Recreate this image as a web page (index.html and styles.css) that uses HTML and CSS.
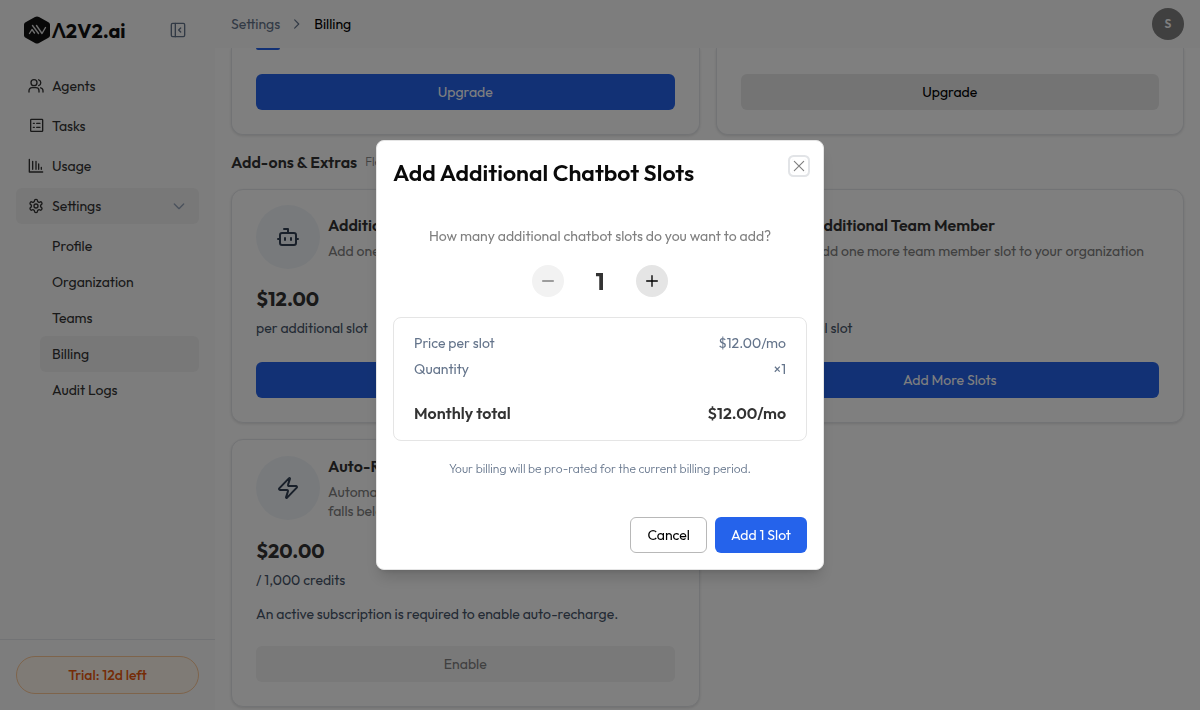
FILE: index.html
```html
<!DOCTYPE html>
<html lang="en">
<head>
<meta charset="utf-8">
<meta name="viewport" content="width=device-width, initial-scale=1">
<title>Billing</title>
<link rel="stylesheet" href="styles.css">
</head>
<body>
<div class="shell">
  <aside class="sidebar">
    <div class="brand">
      <a class="logo" href="#">
        <svg class="logo-mark" viewBox="0 0 26 28"><path d="M11 1a4 4 0 0 1 4 0l9 5a3 3 0 0 1 2 3v10a3 3 0 0 1-2 3l-9 5a4 4 0 0 1-4 0l-9-5a3 3 0 0 1-2-3V9a3 3 0 0 1 2-3z" fill="#111"/><path d="M5.500 17.500 8 13.500l2.500 3.500M8.500 9.500l6 8M12.500 9.500l5.500 8 3.500-6" fill="none" stroke="#ddd" stroke-width="1.400"/></svg>
        <span class="logo-text">Λ2V2.ai</span>
      </a>
      <button class="icon-button" type="button" aria-label="Collapse sidebar"><svg class="icon muted" viewBox="0 0 24 24"><rect x="2" y="2" width="20" height="20" rx="2"/><path d="M8 2v20M16 9l-3 3 3 3"/></svg></button>
    </div>
    <nav class="nav">
      <a class="nav-item" href="#"><svg class="icon" viewBox="0 0 24 24"><circle cx="9" cy="7" r="4.500"/><path d="M1.500 21v-2a4.500 4.500 0 0 1 4.500-4.500h6a4.500 4.500 0 0 1 4.500 4.500v2M16 2.700a4.500 4.500 0 0 1 0 8.600M22.500 21v-2a4.500 4.500 0 0 0-3.500-4.300"/></svg>Agents</a>
      <a class="nav-item" href="#"><svg class="icon" viewBox="0 0 24 24"><rect x="4" y="2" width="18" height="18" rx="1"/><path d="M8 8h1.500M13 8h5M8 14h1.500M13 14h5"/></svg>Tasks</a>
      <a class="nav-item" href="#"><svg class="icon" viewBox="0 0 24 24"><path d="M2 2v19h20M7 5v12M12 5v12M16 9v8M20 14v3"/></svg>Usage</a>
      <a class="nav-item active" href="#"><svg class="icon" viewBox="0 0 24 24"><path d="M12.220 2h-.440a2 2 0 0 0-2 2v.180a2 2 0 0 1-1 1.730l-.430.250a2 2 0 0 1-2 0l-.150-.080a2 2 0 0 0-2.730.730l-.220.380a2 2 0 0 0 .730 2.730l.150.100a2 2 0 0 1 1 1.720v.510a2 2 0 0 1-1 1.740l-.150.090a2 2 0 0 0-.730 2.730l.220.380a2 2 0 0 0 2.730.730l.150-.080a2 2 0 0 1 2 0l.430.250a2 2 0 0 1 1 1.730V20a2 2 0 0 0 2 2h.440a2 2 0 0 0 2-2v-.180a2 2 0 0 1 1-1.730l.430-.250a2 2 0 0 1 2 0l.150.080a2 2 0 0 0 2.730-.730l.220-.390a2 2 0 0 0-.730-2.730l-.150-.080a2 2 0 0 1-1-1.740v-.500a2 2 0 0 1 1-1.740l.150-.090a2 2 0 0 0 .730-2.730l-.220-.380a2 2 0 0 0-2.730-.730l-.150.080a2 2 0 0 1-2 0l-.430-.250a2 2 0 0 1-1-1.730V4a2 2 0 0 0-2-2z"/><circle cx="12" cy="12" r="3"/></svg>Settings<svg class="icon chevron" viewBox="0 0 24 24"><path d="m5 9 7 7 7-7"/></svg></a>
      <div class="subnav">
        <a class="sub-item" href="#">Profile</a>
        <a class="sub-item" href="#">Organization</a>
        <a class="sub-item" href="#">Teams</a>
        <a class="sub-item active" href="#">Billing</a>
        <a class="sub-item" href="#">Audit Logs</a>
      </div>
    </nav>
    <div class="sidebar-footer"><a class="trial" href="#">Trial: 12d left</a></div>
  </aside>
  <div class="page">
    <header class="topbar">
      <nav class="crumbs" aria-label="Breadcrumb"><a href="#">Settings</a><svg class="crumb-arrow" viewBox="0 0 24 24"><path d="m8 5 7 7-7 7"/></svg><span class="current">Billing</span></nav>
      <button class="avatar" type="button">S</button>
    </header>
    <main class="content">
      <div class="grid">
        <section class="card plan"><span class="plan-chip"></span><button class="button primary" type="button">Upgrade</button></section>
        <section class="card plan"><button class="button secondary" type="button">Upgrade</button></section>
      </div>
      <div class="section-head"><h2>Add-ons &amp; Extras</h2><span>Flexible add-ons for your plan</span></div>
      <div class="grid">
        <section class="card">
          <div class="card-head">
            <span class="badge"><svg viewBox="0 0 24 24"><path d="M12 8V4H8"/><rect x="4" y="8" width="16" height="12" rx="2"/><path d="M2 14h2M20 14h2M15 13v2M9 13v2"/></svg></span>
            <div><h3>Additional Chatbot</h3><p>Add one more chatbot slot to your plan</p></div>
          </div>
          <p class="price">$12.00</p><p class="unit">per additional slot</p>
          <button class="button primary" type="button">Add More Slots</button>
        </section>
        <section class="card">
          <div class="card-head">
            <span class="badge"><svg viewBox="0 0 24 24"><path d="M18 21a8 8 0 0 0-16 0"/><circle cx="10" cy="8" r="5"/></svg></span>
            <div><h3>Additional Team Member</h3><p>Add one more team member slot to your organization</p></div>
          </div>
          <p class="price">$12.00</p><p class="unit">per additional slot</p>
          <button class="button primary" type="button">Add More Slots</button>
        </section>
        <section class="card">
          <div class="card-head">
            <span class="badge"><svg viewBox="0 0 24 24"><path d="M4 14a1 1 0 0 1-.780-1.630l9.900-10.200a.500.500 0 0 1 .860.460l-1.920 6.020A1 1 0 0 0 13 10h7a1 1 0 0 1 .780 1.630l-9.900 10.200a.500.500 0 0 1-.860-.460l1.920-6.020A1 1 0 0 0 11 14z"/></svg></span>
            <div><h3>Auto-Recharge</h3><p>Automatically buy credits when your account balance falls below the threshold</p></div>
          </div>
          <p class="price">$20.00</p><p class="unit">/ 1,000 credits</p>
          <p class="unit note">An active subscription is required to enable auto-recharge.</p>
          <button class="button secondary" type="button" disabled>Enable</button>
        </section>
      </div>
    </main>
  </div>
</div>
<div class="overlay">
  <div class="dialog" role="dialog" aria-modal="true" aria-labelledby="dialog-title">
    <h1 id="dialog-title">Add Additional Chatbot Slots</h1>
    <button class="close" type="button" aria-label="Close"><svg viewBox="0 0 24 24"><path d="M4 4l16 16M20 4 4 20"/></svg></button>
    <div class="dialog-body">
      <p class="question">How many additional chatbot slots do you want to add?</p>
      <div class="stepper">
        <button class="round" type="button" aria-label="Decrease" disabled><svg class="icon" viewBox="0 0 24 24"><path d="M4 12h16"/></svg></button>
        <output>1</output>
        <button class="round" type="button" aria-label="Increase"><svg class="icon" viewBox="0 0 24 24"><path d="M4 12h16M12 4v16"/></svg></button>
      </div>
      <dl class="summary">
        <div><dt>Price per slot</dt><dd>$12.00/mo</dd></div>
        <div><dt>Quantity</dt><dd>×1</dd></div>
        <div class="total"><dt>Monthly total</dt><dd>$12.00/mo</dd></div>
      </dl>
      <p class="prorate">Your billing will be pro-rated for the current billing period.</p>
    </div>
    <div class="actions"><button class="button outline" type="button">Cancel</button><button class="button primary" type="button">Add 1 Slot</button></div>
  </div>
</div>
</body>
</html>
```
FILE: styles.css
```css
* { box-sizing: border-box; }
body {
  margin: 0;
  font: 400 14px/20px Outfit, Lato, "Open Sans", sans-serif;
  color: #333;
  background: #fff;
}
h1, h2, h3, p, dl, dd { margin: 0; }
a { color: inherit; text-decoration: none; }
button { font: inherit; border: 0; padding: 0; background: none; color: inherit; }
svg { fill: none; stroke: currentColor; stroke-width: 2; stroke-linecap: round; stroke-linejoin: round; flex: none; }
.icon { width: 16px; height: 16px; }
.muted { color: #64748b; }

.shell { display: flex; height: 100vh; overflow: hidden; }
.sidebar { flex: 0 0 215px; display: flex; flex-direction: column; background: #fafafa; }
.brand { display: flex; align-items: center; justify-content: space-between; padding: 16px 29px 24px 24px; }
.logo { display: flex; align-items: center; gap: 2px; }
.logo-mark { width: 26px; height: 28px; stroke: none; }
.logo-text { padding-top: 2px; font-size: 20px; line-height: 26px; font-weight: 700; color: #111; }
.icon-button { display: flex; }
.nav { flex: 1; display: flex; flex-direction: column; gap: 4px; padding: 0 16px; }
.nav-item, .sub-item { display: flex; align-items: center; gap: 8px; height: 36px; padding: 0 12px; border-radius: 6px; }
.nav-item.active, .sub-item.active { background: #f0f0f0; }
.chevron { margin-left: auto; color: #94a3b8; }
.subnav { padding-left: 24px; }
.sidebar-footer { padding: 16px; border-top: 1px solid #e5e7eb; }
.trial { display: block; padding: 8px; border: 1px solid #fdc896; border-radius: 20px; background: #fff7ed; color: #ea580c; font-weight: 500; text-align: center; }

.page { flex: 1; min-width: 0; display: flex; flex-direction: column; }
.topbar { flex: 0 0 48px; display: flex; align-items: center; justify-content: space-between; padding: 0 16px; background: #fafafa; }
.crumbs { display: flex; align-items: center; gap: 10px; color: #64748b; }
.crumb-arrow { width: 14px; height: 14px; }
.current { color: #000; }
.avatar { width: 32px; height: 32px; border-radius: 50%; background: #808080; color: #fff; font-size: 12px; font-weight: 600; }
.content { flex: 1; padding: 0 16px; overflow: hidden; }
.grid { display: grid; grid-template-columns: 1fr 1fr; gap: 16px; }
.card { display: flex; flex-direction: column; padding: 15px 24px 24px; border: 1px solid #e5e7eb; border-radius: 12px; background: #fff; box-shadow: 0 1px 3px rgba(0, 0, 0, .12); }
.plan { justify-content: space-between; height: 87px; padding-top: 0; border-top: 0; border-radius: 0 0 12px 12px; }
.plan-chip { width: 24px; height: 2px; border-radius: 0 0 6px 6px; background: #2563eb; }
.section-head { display: flex; align-items: center; gap: 8px; padding: 15px 0; }
h2 { font-size: 16px; line-height: 24px; font-weight: 600; }
.section-head span { font-size: 12px; font-weight: 300; color: #808080; }
.card-head { display: flex; align-items: center; gap: 8px; margin-bottom: 16px; }
.badge { flex: 0 0 64px; height: 64px; display: grid; place-items: center; border-radius: 50%; background: #f1f5f9; color: #334155; }
.badge svg { width: 24px; height: 24px; }
h3 { font-size: 16px; line-height: 22px; font-weight: 600; }
.card-head p { margin-top: 6px; line-height: 19px; color: #808080; }
.price { font-size: 20px; line-height: 28px; font-weight: 700; }
.unit { margin-top: 5px; color: #475569; }
.note { margin-top: 14px; }
.button { height: 36px; padding: 0 16px; border-radius: 6px; text-align: center; }
.card > .button { margin-top: 24px; }
.card > .note + .button { margin-top: 22px; }
.plan > .button { margin-top: auto; }
.primary { background: #2563eb; color: #fff; }
.secondary { background: #e8e8e8; color: #000; }
.secondary:disabled { background: #f2f2f2; color: #808080; }
.outline { border: 1px solid #b8b8b8; background: #fff; color: #000; }

.overlay { position: fixed; inset: 0; display: flex; align-items: center; justify-content: center; background: rgba(0, 0, 0, .5); }
.dialog { position: relative; width: 448px; max-width: 100%; padding: 16px; border: 1px solid #e5e5e5; border-radius: 8px; background: #fff; box-shadow: 0 10px 15px -3px rgba(0, 0, 0, .15), 0 4px 6px -4px rgba(0, 0, 0, .15); }
h1 { font-size: 23px; line-height: 32px; font-weight: 600; color: #0a0a0a; }
.close { position: absolute; top: 18px; right: 17px; display: flex; border-radius: 2px; color: #808080; box-shadow: 0 0 0 2px #fff, 0 0 0 4px #e2e4e7; }
.close svg { width: 14px; height: 14px; }
.dialog-body { display: flex; flex-direction: column; gap: 20px; padding: 38px 0 40px; text-align: center; }
.question { line-height: 18px; color: #808080; }
.stepper { display: flex; align-items: center; justify-content: center; gap: 16px; }
.stepper output { width: 40px; font-size: 24px; line-height: 32px; font-weight: 700; }
.round { width: 32px; height: 32px; display: grid; place-items: center; border-radius: 50%; background: #e5e5e5; color: #000; }
.round:disabled { background: #f2f2f2; color: #808080; }
.summary { display: flex; flex-direction: column; gap: 6px; padding: 15px 20px; border: 1px solid #e5e5e5; border-radius: 8px; color: #64748b; }
.summary div { display: flex; justify-content: space-between; }
.summary .total { padding-top: 16px; font-size: 16px; line-height: 24px; font-weight: 600; color: #333; }
.prorate { font-size: 12px; line-height: 16px; font-weight: 300; color: #64748b; }
.actions { display: flex; justify-content: flex-end; gap: 8px; }
```
